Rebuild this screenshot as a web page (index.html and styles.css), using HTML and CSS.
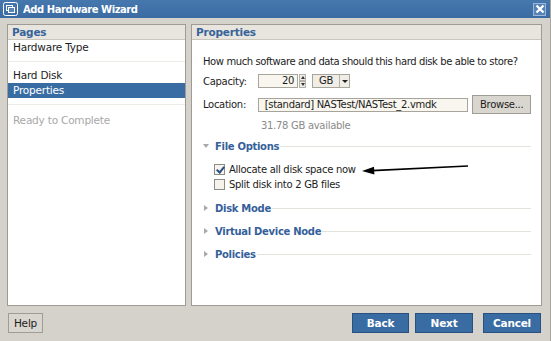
FILE: index.html
```html
<!DOCTYPE html>
<html lang="en">
  <head>
    <meta charset="UTF-8" />
    <title>Add Hardware Wizard</title>
    <link rel="stylesheet" href="styles.css">
  </head>
  <body>
    <div class="window">
      <div class="titlebar">
        <svg class="title-icon" width="15" height="14" viewBox="0 0 15 14">
          <rect x="0.5" y="0.5" width="14" height="13" rx="2" fill="none" stroke="#fff" />
          <rect x="3.5" y="3.5" width="6" height="5" fill="none" stroke="#fff" />
          <rect x="5.5" y="5.5" width="6" height="5" fill="#5a86b8" stroke="#fff" />
        </svg>
        <span class="title">Add Hardware Wizard</span>
        <span class="close">
          <svg width="10" height="10" viewBox="0 0 10 10">
            <path d="M1.5 1.5 L8.5 8.5 M8.5 1.5 L1.5 8.5" stroke="#fff" stroke-width="2.2" />
          </svg>
        </span>
      </div>

      <div class="main">
        <!-- left: page list -->
        <div class="panel pages">
          <div class="panel-head">Pages</div>
          <ul class="page-list">
            <li>Hardware Type</li>
            <li class="sep"></li>
            <li>Hard Disk</li>
            <li class="on">Properties</li>
            <li class="sep"></li>
            <li class="off">Ready to Complete</li>
          </ul>
        </div>

        <!-- right: properties -->
        <div class="panel props">
          <div class="panel-head">Properties</div>
          <div class="props-body">
            <p class="question">How much software and data should this hard disk be able to store?</p>

            <div class="row cap-row">
              <span class="lbl">Capacity:</span>
              <span class="field num">20</span>
              <span class="spin"><i class="up"></i><i class="down"></i></span>
              <span class="select"><span class="sel-val">GB</span><span class="sel-arrow"></span></span>
            </div>

            <div class="row loc-row">
              <span class="lbl">Location:</span>
              <span class="field path">[standard] NASTest/NASTest_2.vmdk</span>
              <span class="btn gray">Browse...</span>
            </div>

            <div class="avail">31.78 GB available</div>

            <div class="section open"><span class="tri"></span><span class="sec-name">File Options</span><span class="rule"></span></div>

            <div class="checks">
              <label class="check"><span class="box checked"></span>Allocate all disk space now</label>
              <label class="check"><span class="box"></span>Split disk into 2 GB files</label>
            </div>

            <div class="section"><span class="tri"></span><span class="sec-name">Disk Mode</span><span class="rule"></span></div>
            <div class="section"><span class="tri"></span><span class="sec-name">Virtual Device Node</span><span class="rule"></span></div>
            <div class="section"><span class="tri"></span><span class="sec-name">Policies</span><span class="rule"></span></div>
          </div>
        </div>
      </div>

      <div class="footer">
        <span class="btn gray help">Help</span>
        <span class="spacer"></span>
        <span class="btn blue back">Back</span>
        <span class="btn blue next">Next</span>
        <span class="btn blue cancel">Cancel</span>
      </div>

      <!-- annotation arrow drawn over the dialog -->
      <svg class="pointer" width="551" height="341" viewBox="0 0 551 341">
        <path d="M468 166 L372 170.6" stroke="#000" stroke-width="1.6" fill="none" />
        <path d="M362 171 L374 166.8 L374.4 174.6 Z" fill="#000" />
      </svg>
    </div>
  </body>
</html>
```

FILE: styles.css
```css
* {
  margin: 0;
  padding: 0;
  box-sizing: border-box;
}
body {
  width: 551px;
  height: 341px;
  overflow: hidden;
  font-family: "DejaVu Sans", Verdana, sans-serif;
  font-size: 10.5px;
  letter-spacing: -0.2px;
  color: #1c1c1c;
}
.window {
  position: relative;
  width: 551px;
  height: 341px;
  background: #d5d2cb;
  display: flex;
  flex-direction: column;
  border-right: 1px solid #a8a59e;
}
.titlebar {
  height: 18px;
  background: linear-gradient(#4677ad, #3a6ba2);
  display: flex;
  align-items: center;
  padding: 0 3px;
  color: #fff;
}
.title-icon {
  margin-right: 5px;
}
.title {
  font-weight: bold;
  font-size: 10px;
  letter-spacing: -0.45px;
  flex: 1;
}
.close {
  width: 13px;
  height: 13px;
  border: 1px solid #9db7d6;
  background: #5583b8;
  display: flex;
  align-items: center;
  justify-content: center;
  margin-right: 1px;
}
.main {
  display: flex;
  gap: 5px;
  padding: 6px 8px 0 7px;
  height: 288px;
}
.panel {
  border: 1px solid #9e9b94;
  background: #fff;
  display: flex;
  flex-direction: column;
}
.pages {
  width: 179px;
  flex-shrink: 0;
}
.props {
  flex: 1;
  min-width: 0;
}
.panel-head {
  height: 15px;
  line-height: 14px;
  background: #e7e5de;
  border-bottom: 1px solid #c9c6be;
  color: #37639a;
  font-weight: bold;
  padding-left: 4px;
}
.page-list {
  list-style: none;
  padding-top: 1px;
}
.page-list li {
  height: 14px;
  line-height: 13px;
  padding-left: 5px;
}
.page-list li.sep {
  position: relative;
}
.page-list li.sep::after {
  content: "";
  position: absolute;
  left: 0;
  right: 0;
  top: 6px;
  border-top: 1px solid #ecebe6;
}
.page-list li.on {
  height: 15px;
  line-height: 14px;
  background: #3a6ca4;
  color: #fff;
}
.page-list li.off {
  color: #a8a8a8;
  height: 16px;
  line-height: 16px;
}
.props-body {
  padding: 15px 10px 0 11px;
  font-size: 10px;
  letter-spacing: -0.3px;
}
.question {
  line-height: 13px;
  white-space: nowrap;
  letter-spacing: -0.4px;
  margin-bottom: 6px;
}
.row {
  display: flex;
  align-items: center;
}
.lbl {
  width: 55px;
}
.cap-row {
  height: 14px;
}
.field {
  height: 14px;
  border: 1px solid #a7a49c;
  background: #f8f6ee;
  line-height: 12px;
}
.num {
  width: 40px;
  text-align: right;
  padding-right: 3px;
}
.spin {
  width: 7px;
  height: 14px;
  display: flex;
  flex-direction: column;
  margin-left: 1px;
  margin-right: 6px;
}
.spin i {
  flex: 1;
  position: relative;
  background: #eeece5;
  border: 1px solid #b4b1a9;
}
.spin i::after {
  content: "";
  position: absolute;
  left: 1px;
  border-left: 2px solid transparent;
  border-right: 2px solid transparent;
}
.spin .up::after {
  top: 1px;
  border-bottom: 3px solid #333;
}
.spin .down::after {
  top: 1px;
  border-top: 3px solid #333;
}
.select {
  display: flex;
  height: 14px;
  border: 1px solid #a7a49c;
  background: #efede6;
}
.sel-val {
  width: 27px;
  text-align: center;
  line-height: 12px;
  border-right: 1px solid #b4b1a9;
}
.sel-arrow {
  width: 9px;
  position: relative;
}
.sel-arrow::after {
  content: "";
  position: absolute;
  left: 2px;
  top: 5px;
  border-left: 3px solid transparent;
  border-right: 3px solid transparent;
  border-top: 3px solid #222;
}
.loc-row {
  height: 19px;
  margin-top: 7px;
}
.path {
  width: 212px;
  padding-left: 6px;
}
.btn {
  display: flex;
  align-items: center;
  justify-content: center;
}
.gray {
  background: #d9d6cf;
  border: 1px solid #9f9c95;
  color: #1c1c1c;
}
.loc-row .gray {
  width: 59px;
  height: 19px;
  margin-left: 4px;
}
.avail {
  color: #8a8a8a;
  padding-left: 58px;
  margin-top: 5px;
  line-height: 14px;
}
.section {
  display: flex;
  align-items: center;
  height: 14px;
  color: #35609a;
  font-weight: bold;
  letter-spacing: -0.3px;
  margin-top: 9px;
}
.tri {
  width: 8px;
  margin-right: 4px;
  position: relative;
  height: 8px;
}
.tri::after {
  content: "";
  position: absolute;
  left: 1px;
  top: 1px;
  border-top: 3px solid transparent;
  border-bottom: 3px solid transparent;
  border-left: 4px solid #a9a9a9;
}
.section.open .tri::after {
  left: 0;
  top: 2px;
  border-left: 3px solid transparent;
  border-right: 3px solid transparent;
  border-top: 4px solid #a9a9a9;
  border-bottom: 0;
}
.section.open {
  margin-top: 6px;
}
.rule {
  flex: 1;
  border-top: 1px solid #e3e2dd;
  margin-left: 1px;
}
.checks {
  margin-top: 9px;
  padding-left: 11px;
  margin-bottom: 7px;
}
.check {
  display: flex;
  align-items: center;
  height: 15px;
}
.box {
  width: 11px;
  height: 11px;
  border: 1px solid #8e8c86;
  background: #f5f3ec;
  margin-right: 4px;
  position: relative;
}
.box.checked::after {
  content: "";
  position: absolute;
  left: 3px;
  top: 0px;
  width: 3px;
  height: 6px;
  border-right: 2px solid #2b4d85;
  border-bottom: 2px solid #2b4d85;
  transform: rotate(40deg);
}
.footer {
  display: flex;
  padding: 7px 9px 0 8px;
  height: 35px;
  align-items: flex-start;
}
.help {
  width: 35px;
  height: 20px;
}
.spacer {
  flex: 1;
}
.blue {
  background: #3a6ca4;
  border: 1px solid #29507f;
  color: #fff;
  font-weight: bold;
  height: 20px;
}
.back {
  width: 57px;
}
.next {
  width: 58px;
  margin-left: 6px;
}
.cancel {
  width: 58px;
  margin-left: 10px;
}
.pointer {
  position: absolute;
  left: 0;
  top: 0;
  pointer-events: none;
}
```
